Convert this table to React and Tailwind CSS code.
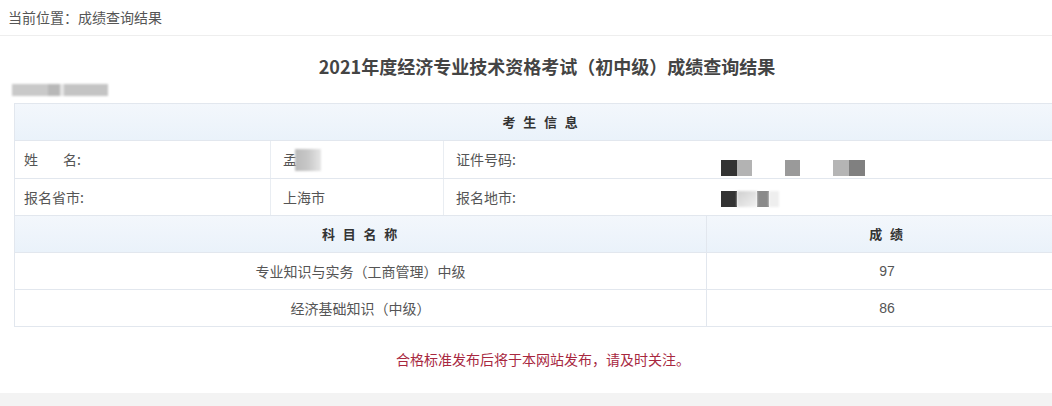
export default function App() {
  const font = "font-['Noto_Sans_CJK_SC','Noto_Sans',sans-serif]";
  return (
    <div className={`w-[1052px] h-[406px] overflow-hidden bg-white flex flex-col ${font}`}>
      <div className="h-[36px] shrink-0 flex items-center pl-[8px] text-[14px] text-[#555] border-b border-[#eeeeee]">
        当前位置：成绩查询结果
      </div>
      <div className="w-[1094px] shrink-0 pt-[19px] text-center text-[18px] leading-[22px] font-bold text-[#444]">
        2021年度经济专业技术资格考试（初中级）成绩查询结果
      </div>
      <div className="mt-[7px] ml-[12px] h-[12px] w-[96px] shrink-0 flex blur-[1px]">
        <div className="w-[36px] bg-[#c9c9c9]" />
        <div className="w-[12px] bg-[#b8b8b8]" />
        <div className="w-[4px] bg-[#e6e6e6]" />
        <div className="w-[44px] bg-[#c4c4c4]" />
      </div>
      <div className="mt-[7px] ml-[14px] w-[1053px] shrink-0 border-l border-t border-[#e2e7ee] text-[14px] text-[#555]">
        <div className="h-[37px] flex items-center justify-center bg-gradient-to-b from-[#f3f7fc] to-[#eaf2fa] border-b border-[#e2e7ee] font-bold text-[13px] text-[#333] tracking-[0.6em] pl-[6px]">
          考生信息
        </div>
        <div className="h-[38px] flex border-b border-[#e2e7ee]">
          <div className="w-[256px] flex items-center pl-[9px] border-r border-[#e9edf2]">
            姓<span className="inline-block w-[25px]" />名:
          </div>
          <div className="w-[173px] flex items-center pl-[12px] border-r border-[#e9edf2]">
            孟
            <span className="inline-block ml-[-2px] w-[26px] h-[22px] bg-gradient-to-r from-[#bbbbbb] via-[#c8c8c8] to-[#e6e6e6] blur-[1px]" />
          </div>
          <div className="w-[264px] flex items-center pl-[12px]">证件号码:</div>
          <div className="flex-1 relative">
            <div className="absolute left-[13px] top-[19px] flex h-[16px]">
              <div className="w-[16px] bg-[#333333]" />
              <div className="w-[15px] bg-[#b3b3b3]" />
              <div className="w-[33px]" />
              <div className="w-[15px] bg-[#9a9a9a]" />
              <div className="w-[33px]" />
              <div className="w-[16px] bg-[#b5b5b5]" />
              <div className="w-[16px] bg-[#808080]" />
            </div>
          </div>
        </div>
        <div className="h-[37px] flex border-b border-[#e2e7ee]">
          <div className="w-[256px] flex items-center pl-[9px] border-r border-[#e9edf2]">报名省市:</div>
          <div className="w-[173px] flex items-center pl-[12px] border-r border-[#e9edf2]">上海市</div>
          <div className="w-[264px] flex items-center pl-[12px]">报名地市:</div>
          <div className="flex-1 relative">
            <div className="absolute left-[13px] top-[12px] flex h-[16px]">
              <div className="w-[16px] bg-[#333333]" />
              <div className="w-[20px] bg-gradient-to-br from-[#cfcfcf] to-[#f2f2f2] blur-[1px]" />
              <div className="w-[12px] bg-[#8a8a8a]" />
              <div className="w-[10px] bg-[#eeeeee] blur-[1px]" />
            </div>
          </div>
        </div>
        <div className="h-[37px] flex bg-gradient-to-b from-[#f3f7fc] to-[#eaf2fa] border-b border-[#e2e7ee] font-bold text-[13px] text-[#333]">
          <div className="w-[692px] flex items-center justify-center tracking-[0.6em] pl-[6px] border-r border-[#e2e7ee]">科目名称</div>
          <div className="flex-1 flex items-center justify-center tracking-[0.6em] pl-[6px]">成绩</div>
        </div>
        <div className="h-[37px] flex border-b border-[#e2e7ee]">
          <div className="w-[692px] flex items-center justify-center border-r border-[#e2e7ee]">专业知识与实务（工商管理）中级</div>
          <div className="flex-1 flex items-center justify-center font-['Liberation_Sans',sans-serif]">97</div>
        </div>
        <div className="h-[37px] flex border-b border-[#e2e7ee]">
          <div className="w-[692px] flex items-center justify-center border-r border-[#e2e7ee]">经济基础知识（中级）</div>
          <div className="flex-1 flex items-center justify-center font-['Liberation_Sans',sans-serif]">86</div>
        </div>
      </div>
      <div className="w-[1086px] shrink-0 mt-[22px] text-center text-[14px] leading-[20px] text-[#a8283f]">
        合格标准发布后将于本网站发布，请及时关注。
      </div>
      <div className="mt-auto h-[13px] shrink-0 bg-[#f3f3f3]" />
    </div>
  );
}
